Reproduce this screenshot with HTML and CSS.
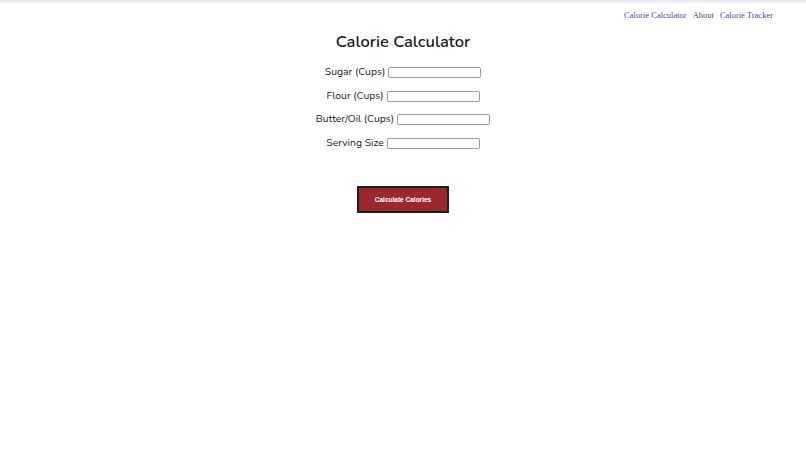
FILE: index.html
```html
<!DOCTYPE html>
<html lang="en">
<head>
    <meta charset="UTF-8">
    <title>Calorie Calculator</title>
    <link rel="stylesheet" href="styles.css">
</head>
<body>
    <div class="topbar"></div>
    <nav class="nav">
        <a href="#">Calorie Calculator</a>
        <a href="#">About</a>
        <a href="#">Calorie Tracker</a>
    </nav>

    <main class="calc">
        <h1>Calorie Calculator</h1>
        <div class="field">
            <label>Sugar (Cups)</label>
            <input type="text" class="field-input">
        </div>
        <div class="field">
            <label>Flour (Cups)</label>
            <input type="text" class="field-input">
        </div>
        <div class="field">
            <label>Butter/Oil (Cups)</label>
            <input type="text" class="field-input">
        </div>
        <div class="field">
            <label>Serving Size</label>
            <input type="text" class="field-input">
        </div>
        <button class="calc-btn">Calculate Calories</button>
    </main>
</body>
</html>
```

FILE: styles.css
```css
* {
    margin: 0;
    padding: 0;
    box-sizing: border-box;
}

body {
    background: #fff;
    font-family: 'Nunito', 'Lato', 'Open Sans', sans-serif;
    color: #1a1a1a;
}

.topbar {
    height: 2px;
    background: #ececec;
    box-shadow: 0 1px 2px rgba(0, 0, 0, 0.06);
}

.nav {
    display: flex;
    justify-content: flex-end;
    gap: 6px;
    padding: 8px 33px 0 0;
    font-family: 'Liberation Serif', serif;
    font-size: 8.5px;
}

.nav a {
    color: #5e4291;
    text-decoration: none;
}

.calc {
    display: flex;
    flex-direction: column;
    align-items: center;
    padding-top: 10px;
}

.calc h1 {
    font-size: 16.5px;
    font-weight: 600;
    margin-bottom: 7px;
}

.field {
    display: flex;
    align-items: center;
    gap: 3px;
    height: 23.6px;
    font-size: 10.4px;
    color: #222;
}

.field-input {
    width: 93px;
    height: 11px;
    border: 1px solid #9a9a9a;
    border-radius: 2px;
    margin-top: 2px;
}

.calc-btn {
    margin-top: 32px;
    width: 92px;
    height: 27px;
    background: #9b282c;
    border: 2px solid #1e1e1e;
    color: #fff;
    font-family: 'Liberation Sans', Arial, sans-serif;
    font-size: 6.5px;
    font-weight: bold;
    cursor: pointer;
}
```
